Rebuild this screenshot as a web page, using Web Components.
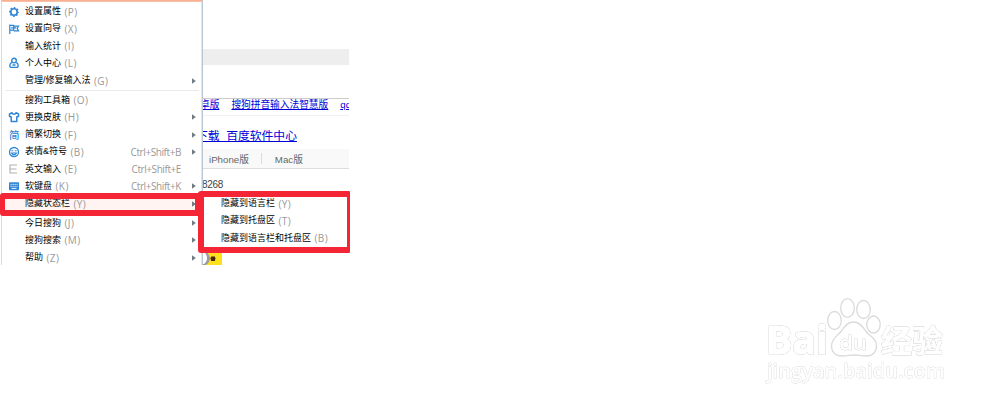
<!DOCTYPE html>
<html lang="zh-CN">
<head>
<meta charset="utf-8">
<title>输入法菜单</title>
<style>
    body {
        margin: 0;
        width: 1000px;
        height: 406px;
        position: relative;
        overflow: hidden;
        background: white;
        font-family: "Liberation Sans", "Noto Sans CJK SC", sans-serif;
    }
    ime-menu, sub-menu, site-watermark, mark-box {
        position: absolute;
    }
    ime-menu { left: 1px; top: 0; }
    sub-menu { left: 203px; top: 195px; }
    site-watermark { left: 750px; top: 285px; }
    .mark-row { left: 0; top: 193px; width: 201px; height: 23px; }
    .mark-sub { left: 198px; top: 191px; width: 152px; height: 62px; --side: 3px; --left: 6px; }
</style>
</head>
<body>
<browser-page></browser-page>
<ime-menu>
    <menu-item icon="gear" key="P">设置属性</menu-item>
    <menu-item icon="flag" key="X">设置向导</menu-item>
    <menu-item key="I">输入统计</menu-item>
    <menu-item icon="user" key="L">个人中心</menu-item>
    <menu-item key="G" arrow>管理/修复输入法</menu-item>
    <menu-line></menu-line>
    <menu-item key="O">搜狗工具箱</menu-item>
    <menu-item icon="shirt" key="H" arrow>更换皮肤</menu-item>
    <menu-item icon="jian" key="F" arrow>简繁切换</menu-item>
    <menu-item icon="smile" key="B" hotkey="Ctrl+Shift+B" arrow>表情&amp;符号</menu-item>
    <menu-item icon="eng" key="E" hotkey="Ctrl+Shift+E">英文输入</menu-item>
    <menu-item icon="keyboard" key="K" hotkey="Ctrl+Shift+K" arrow>软键盘</menu-item>
    <menu-item key="Y" arrow active>隐藏状态栏</menu-item>
    <menu-line></menu-line>
    <menu-item key="J" arrow>今日搜狗</menu-item>
    <menu-item key="M" arrow>搜狗搜索</menu-item>
    <menu-item key="Z" arrow>帮助</menu-item>
</ime-menu>
<sub-menu>
    <menu-item key="Y">隐藏到语言栏</menu-item>
    <menu-item key="T">隐藏到托盘区</menu-item>
    <menu-item key="B">隐藏到语言栏和托盘区</menu-item>
</sub-menu>
<mark-box class="mark-row"></mark-box>
<mark-box class="mark-sub"></mark-box>
<site-watermark></site-watermark>

<script>
const ICONS = {
    gear: `<circle cx="6" cy="6" r="3.2" fill="none" stroke="#2f86d6" stroke-width="1.6"/>
        <circle cx="6" cy="6" r="4.4" fill="none" stroke="#2f86d6" stroke-width="1.1" stroke-dasharray="1.7 1.756" stroke-dashoffset=".85"/>`,
    flag: `<path d="M1.8 1.5v9.5M2 2.4h3.7v4.8H2M5.7 3.2h4.8L9.2 5.4l1.3 2.5H5.7M3.2 4.8h5" fill="none" stroke="#2f86d6" stroke-width="1.2"/>`,
    user: `<circle cx="6" cy="3.6" r="2.3" fill="none" stroke="#2f86d6" stroke-width="1.4"/>
        <path d="M3.8 5.4C1.2 7 1.4 10.4 3.2 10.4h5.6c1.8 0 2-3.4-.6-5M4.5 8h3" fill="none" stroke="#2f86d6" stroke-width="1.4"/>`,
    shirt: `<path d="M4 1.8 1.5 3v2.4l1.7.3v4.8h5.6V5.7l1.7-.3V3L8 1.8C7.4 3.7 4.6 3.7 4 1.8z" fill="none" stroke="#2f86d6" stroke-width="1.5" stroke-linejoin="round"/>`,
    jian: `<text x="1" y="9.8" font-size="10.5" font-weight="500" fill="#2f86d6">简</text>`,
    smile: `<circle cx="6" cy="6" r="4.5" fill="none" stroke="#2f86d6" stroke-width="1.3"/>
        <path d="M3.4 4.8h1.8M6.8 4.8h1.8M3.5 7c1 2.2 4 2.2 5 0z" fill="none" stroke="#2f86d6" stroke-width="1.1"/>`,
    eng: `<path d="M9 2H2v8h7M2 6h6.500" fill="none" stroke="#b0b0b0" stroke-width="1.1"/>`,
    keyboard: `<rect x="1" y="2.2" width="10" height="8" rx="1" fill="#2f86d6"/>
        <path d="M2.5 4.4h7M2.5 6.3h7" stroke="#fff" stroke-width=".9" stroke-dasharray="1.2 .8"/><path d="M3.5 8.4h5" stroke="#fff" stroke-width=".9"/>`
};

class MenuItem extends HTMLElement {
    constructor() {
        super();
        this.attachShadow({ mode: "open" });
        const icon = ICONS[this.getAttribute("icon")] || "";
        const hotkey = this.getAttribute("hotkey") || "";
        this.shadowRoot.innerHTML = `
            <style>
                :host {
                    display: flex;
                    align-items: center;
                    height: 17.25px;
                    padding-left: 6px;
                    font-size: 9px;
                    line-height: 17px;
                    color: #000;
                    white-space: nowrap;
                }
                :host([active]) {
                    background: #fff4f1;
                }
                .icon {
                    width: 12px;
                    height: 12px;
                    margin-right: 5px;
                    flex: none;
                }
                .key, .hotkey {
                    font: 10px "Open Sans", sans-serif;
                    color: #999;
                }
                .key {
                    margin-left: 3.5px;
                    letter-spacing: .4px;
                }
                .hotkey {
                    margin-left: auto;
                    margin-right: 11px;
                    letter-spacing: -.42px;
                }
                .arrow {
                    width: 4px;
                    height: 6px;
                    margin-right: 6px;
                    flex: none;
                }
            </style>
            <svg class="icon" viewBox="0 0 12 12">${icon}</svg>
            <slot></slot><span class="key">(${this.getAttribute("key")})</span>
            <span class="hotkey">${hotkey}</span>
            <svg class="arrow" viewBox="0 0 4 6">${this.hasAttribute("arrow") ? '<path d="M0 .2v5.6L3.800 3z" fill="#6f7a82"/>' : ""}</svg>
        `;
    }
}

class MenuLine extends HTMLElement {
    constructor() {
        super();
        this.attachShadow({ mode: "open" });
        this.shadowRoot.innerHTML = `
            <style>
                :host {
                    display: block;
                    height: 1px;
                    margin: .6px 3px;
                    background: #e9ebec;
                }
            </style>
        `;
    }
}

class ImeMenu extends HTMLElement {
    constructor() {
        super();
        this.attachShadow({ mode: "open" });
        this.shadowRoot.innerHTML = `
            <style>
                :host {
                    display: block;
                    box-sizing: border-box;
                    width: 202px;
                    height: 265px;
                    overflow: hidden;
                    padding-top: 2px;
                    background: white;
                    border-top: 1px solid #f8b091;
                    border-left: 1px solid #d3dce4;
                    border-right: 1px solid #b9c8d2;
                    box-shadow: inset 0 1px 0 #f9c0a8, inset -1px 0 0 #dfe6ea;
                }
            </style>
            <slot></slot>
        `;
    }
}

class SubMenu extends HTMLElement {
    constructor() {
        super();
        this.attachShadow({ mode: "open" });
        this.shadowRoot.innerHTML = `
            <style>
                :host {
                    display: block;
                    box-sizing: border-box;
                    width: 146px;
                    height: 55px;
                    background: white;
                }
                ::slotted(menu-item) { padding-left: 1px; }
            </style>
            <slot></slot>
        `;
    }
}

class MarkBox extends HTMLElement {
    constructor() {
        super();
        this.attachShadow({ mode: "open" });
        this.shadowRoot.innerHTML = `
            <style>
                :host {
                    display: block;
                    box-sizing: border-box;
                    border: solid #f42534;
                    border-width: 6px var(--side, 6px) 6px var(--left, 5px);
                    border-radius: 3px 1px 1px 3px;
                }
            </style>
        `;
    }
}

class BrowserPage extends HTMLElement {
    constructor() {
        super();
        this.attachShadow({ mode: "open" });
        this.shadowRoot.innerHTML = `
            <style>
                :host {
                    display: flex;
                    flex-direction: column;
                    box-sizing: border-box;
                    width: 349px;
                    height: 265px;
                    padding: 49px 0 0 202px;
                    overflow: hidden;
                    white-space: nowrap;
                    color: #666;
                }
                .bar { height: 16px; background: #eee; }
                .links {
                    box-sizing: border-box;
                    height: 18px;
                    margin-top: 33px;
                    border-top: 1px solid #ccc;
                    border-bottom: 1px solid #f1f1f1;
                    display: flex;
                    gap: 12px;
                    font-size: 9.7px;
                    line-height: 12px;
                }
                a { color: #0000d8; text-decoration: underline; }
                .links a:first-child { margin-left: -2px; }
                h3 {
                    margin: 9px 0 0 -6px;
                    height: 24px;
                    font-size: 11.8px;
                    font-weight: normal;
                    line-height: 22px;
                }
                .tabs {
                    box-sizing: border-box;
                    height: 20px;
                    display: flex;
                    align-items: center;
                    padding-left: 7px;
                    font-size: 9.7px;
                    background: #f9f9f9;
                    border-bottom: 1px solid #ddd;
                }
                .tabs i { width: 1px; height: 11px; margin: 0 13px 0 12px; background: #ddd; }
                p { margin: 9px 0 0 0; height: 13px; font-size: 10px; letter-spacing: -.3px; line-height: 13px; color: #444; }
                .logo { display: block; width: 20px; height: 13px; margin-top: 61px; }
            </style>
            <div class="bar"></div>
            <div class="links"><a>卓版</a><a>搜狗拼音输入法智慧版</a><a>qq</a></div>
            <h3><a>下载_百度软件中心</a></h3>
            <div class="tabs"><span>iPhone版</span><i></i><span>Mac版</span></div>
            <p>8268</p>
            <svg class="logo" viewBox="0 0 20 13">
                <path d="M0 0h20v13H0z" fill="#ffe01c"/>
                <path d="M0 0h4c5 3 5 10 0 13H0z" fill="#9a9aa8"/>
                <path d="M0 0h2c4 3 4 9 0 12H0z" fill="#fff"/>
                <path d="M7 6.5h7" stroke="#c58a0b" stroke-width="2"/>
                <rect x="9" y="4.5" width="4" height="4.5" fill="#42290b"/>
            </svg>
        `;
    }
}

class SiteWatermark extends HTMLElement {
    constructor() {
        super();
        this.attachShadow({ mode: "open" });
        this.shadowRoot.innerHTML = `
            <style>
                :host { display: block; width: 220px; height: 110px; }
                svg { display: block; }
                text {
                    font-family: "Open Sans", "Noto Sans CJK SC", sans-serif;
                    filter: drop-shadow(0 0 .7px #999);
                }
                .thin { filter: drop-shadow(0 0 .7px #aaa); }
            </style>
            <svg width="220" height="110" fill="#fff" stroke="#fff" stroke-linejoin="round">
                <text x="16" y="68.500" font-size="39" font-weight="700" stroke-width="1.400" textLength="62" lengthAdjust="spacingAndGlyphs">Bai</text>
                <g stroke="#dadada" stroke-width="1.300">
                    <ellipse cx="84.500" cy="35.500" rx="6.800" ry="9"/>
                    <ellipse cx="97.500" cy="23" rx="6.800" ry="9.300"/>
                    <ellipse cx="113.500" cy="24.500" rx="6.800" ry="9"/>
                    <ellipse cx="123.500" cy="39.500" rx="6.700" ry="8.500"/>
                    <path d="M103.500 37c-6 0-9 4-12 9-3 4-10 7-10 15 0 7 5 10 11 10 5 0 8-1 12-1s7 1 12 1c6 0 10-4 10-10 0-8-7-10-11-15-3-5-6-9-12-9z"/>
                </g>
                <text x="89" y="64.500" font-size="20" font-weight="600" stroke-width=".4" textLength="28" lengthAdjust="spacingAndGlyphs">du</text>
                <text x="131" y="67" font-size="31" font-weight="700" stroke-width=".8" textLength="62" lengthAdjust="spacingAndGlyphs">经验</text>
                <text class="thin" x="17" y="92.500" font-size="20" font-weight="600" stroke-width=".5" textLength="178" lengthAdjust="spacingAndGlyphs">jingyan.baidu.com</text>
            </svg>
        `;
    }
}

customElements.define("menu-item", MenuItem);
customElements.define("menu-line", MenuLine);
customElements.define("ime-menu", ImeMenu);
customElements.define("sub-menu", SubMenu);
customElements.define("mark-box", MarkBox);
customElements.define("browser-page", BrowserPage);
customElements.define("site-watermark", SiteWatermark);
</script>
</body>
</html>
